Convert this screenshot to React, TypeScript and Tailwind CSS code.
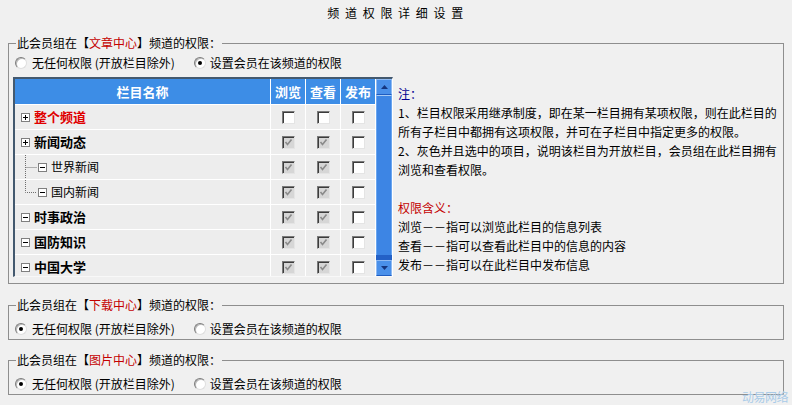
import React from 'react';
import clsx from 'clsx';

type Row = { name: string; level: 0 | 1; open: boolean; red?: boolean; last?: boolean };

const rows: Row[] = [
  { name: '整个频道', level: 0, open: false, red: true },
  { name: '新闻动态', level: 0, open: false },
  { name: '世界新闻', level: 1, open: true },
  { name: '国内新闻', level: 1, open: true, last: true },
  { name: '时事政治', level: 0, open: true },
  { name: '国防知识', level: 0, open: true },
  { name: '中国大学', level: 0, open: true },
];

function Radio({ on }: { on?: boolean }) {
  return (
    <span className="flex h-[12px] w-[12px] shrink-0 items-center justify-center rounded-full border border-t-[#7c7c7c] border-l-[#7c7c7c] border-r-[#dedede] border-b-[#dedede] bg-white shadow-[inset_1px_1px_0_#b8b8b8]">
      {on && <span className="h-[4px] w-[4px] rounded-full bg-black" />}
    </span>
  );
}

function RadioRow({ first }: { first: boolean }) {
  return (
    <div className="flex items-center pl-[6px]">
      <Radio on={!first} />
      <span className="ml-[5px]">无任何权限 (开放栏目除外)</span>
      <span className="ml-[19px]">
        <Radio on={first} />
      </span>
      <span className="ml-[4px]">设置会员在该频道的权限</span>
    </div>
  );
}

function CheckBox({ checked, disabled }: { checked?: boolean; disabled?: boolean }) {
  return (
    <span
      className={clsx(
        'flex h-[13px] w-[13px] items-center justify-center border border-t-[#7a7a7a] border-l-[#7a7a7a] border-r-[#e4e4e4] border-b-[#e4e4e4] shadow-[inset_1px_1px_0_#3c3c3c]',
        disabled ? 'bg-[#d6d6d6]' : 'bg-white'
      )}
    >
      {checked && (
        <svg width="9" height="9" viewBox="0 0 9 9">
          <path d="M1.5 4 L3.5 6.5 L7.5 1.5" fill="none" stroke="#8a8a8a" strokeWidth="1.6" />
        </svg>
      )}
    </span>
  );
}

function TreeBox({ plus }: { plus: boolean }) {
  return (
    <svg width="9" height="9" viewBox="0 0 9 9" className="shrink-0">
      <rect x="0.5" y="0.5" width="8" height="8" fill="#fff" stroke="#7f7f7f" />
      <path d="M2 4.5h5" stroke="#000" />
      {plus && <path d="M4.5 2v5" stroke="#000" />}
    </svg>
  );
}

function Legend({ channel }: { channel: string }) {
  return (
    <legend className="ml-[7px] px-[1px] leading-[16px]">
      此会员组在【<span className="text-[#c40000]">{channel}</span>】频道的权限：
    </legend>
  );
}

function ScrollBar() {
  return (
    <div className="flex w-[16px] flex-col bg-[#3f87e6]">
      {/* up button */}
      <div className="flex h-[16px] items-center justify-center border border-[#8fbaf2] border-b-[#1f5cc0] bg-[#4a90ea]">
        <svg width="7" height="4" viewBox="0 0 7 4">
          <path d="M0 4 L3.5 0 L7 4Z" fill="#15357f" />
        </svg>
      </div>
      {/* thumb */}
      <div className="flex-1 border-x border-[#6aa6f0] border-t border-t-[#a8cbf5] bg-[#3d85e4]" />
      <div className="h-[5px] bg-[#2461c6]" />
      {/* down button */}
      <div className="flex h-[16px] items-center justify-center border border-[#8fbaf2] border-b-[#1f5cc0] bg-[#4a90ea]">
        <svg width="7" height="4" viewBox="0 0 7 4">
          <path d="M0 0 L3.5 4 L7 0Z" fill="#15357f" />
        </svg>
      </div>
    </div>
  );
}

function ColumnTable() {
  return (
    <div className="ml-[4px] mt-[2px] flex h-[200px] w-[380px] border-t-2 border-l-2 border-r border-b border-t-[#43596f] border-l-[#43596f] border-r-white border-b-[#f8f8f8]">
      <div className="h-full overflow-hidden">
        <div className="grid grid-cols-[255px_34px_34px_34px] gap-[1px] bg-white">
          {['栏目名称', '浏览', '查看', '发布'].map((h) => (
            <div
              key={h}
              className="flex h-[25px] items-center justify-center bg-[#3d8de6] text-[13px] font-bold text-white"
            >
              {h}
            </div>
          ))}
          {rows.map((r, i) => (
            <React.Fragment key={r.name}>
              <div className="flex h-[24px] items-center bg-[#ededed] pl-[6px]">
                {r.level === 1 && (
                  <svg width="17" height="24" viewBox="0 0 17 24" className="shrink-0">
                    <path
                      d={r.last ? 'M4.5 0V12.5H16' : 'M4.5 0V24M4.5 12.5H16'}
                      fill="none"
                      stroke="#6e6e6e"
                      strokeDasharray="1 1"
                    />
                  </svg>
                )}
                <TreeBox plus={!r.open} />
                <span
                  className={clsx(
                    'ml-[4px]',
                    r.level === 0 ? 'text-[13px] font-bold' : 'text-[12px]',
                    r.red && 'text-[#e00000]'
                  )}
                >
                  {r.name}
                </span>
              </div>
              <div className="flex h-[24px] items-center justify-center bg-[#ededed]">
                <CheckBox checked={i > 0} disabled={i > 0} />
              </div>
              <div className="flex h-[24px] items-center justify-center bg-[#ededed]">
                <CheckBox checked={i > 0} disabled={i > 0} />
              </div>
              <div className="flex h-[24px] items-center justify-center bg-[#ededed]">
                <CheckBox />
              </div>
            </React.Fragment>
          ))}
        </div>
      </div>
      <div className="w-[1px] bg-white" />
      <ScrollBar />
    </div>
  );
}

function Notes() {
  return (
    <div className="ml-[5px] mt-[2px] whitespace-nowrap pt-[7px] leading-[19px]">
      <div className="text-[#000090]">注：</div>
      <div>1、栏目权限采用继承制度，即在某一栏目拥有某项权限，则在此栏目的</div>
      <div>所有子栏目中都拥有这项权限，并可在子栏目中指定更多的权限。</div>
      <div>2、灰色并且选中的项目，说明该栏目为开放栏目，会员组在此栏目拥有</div>
      <div>浏览和查看权限。</div>
      <div className="h-[19px]" />
      <div className="text-[#c40000]">权限含义：</div>
      <div>浏览－－指可以浏览此栏目的信息列表</div>
      <div>查看－－指可以查看此栏目中的信息的内容</div>
      <div>发布－－指可以在此栏目中发布信息</div>
    </div>
  );
}

export default function App() {
  return (
    <div className="relative h-[405px] w-full overflow-hidden bg-[#f0f0f0] font-['Noto_Sans_CJK_SC','Noto_Sans',sans-serif] text-[12px] text-black">
      <div className="h-[35px] pt-[5px] text-center leading-[16px] tracking-[1.5px]">频 道 权 限 详 细 设 置</div>

      {/* 文章中心: column permissions */}
      <fieldset className="mx-[8px] border border-[#8e8e8e] p-0 pb-[6px]">
        <Legend channel="文章中心" />
        <div className="flex h-[24px] items-center">
          <RadioRow first />
        </div>
        <div className="flex items-start">
          <ColumnTable />
          <Notes />
        </div>
      </fieldset>

      <fieldset className="mx-[8px] mt-[13px] border border-[#8e8e8e] p-0">
        <Legend channel="下载中心" />
        <div className="mt-[6px] flex h-[20px] items-center">
          <RadioRow first={false} />
        </div>
      </fieldset>

      <fieldset className="mx-[8px] mt-[12px] border border-[#8e8e8e] p-0">
        <Legend channel="图片中心" />
        <div className="mt-[6px] flex h-[20px] items-center">
          <RadioRow first={false} />
        </div>
      </fieldset>

      <div className="absolute bottom-0 right-[4px] text-[12px] leading-[17px] tracking-[-0.5px] text-[#a9cbe8]">动易网络</div>
    </div>
  );
}
